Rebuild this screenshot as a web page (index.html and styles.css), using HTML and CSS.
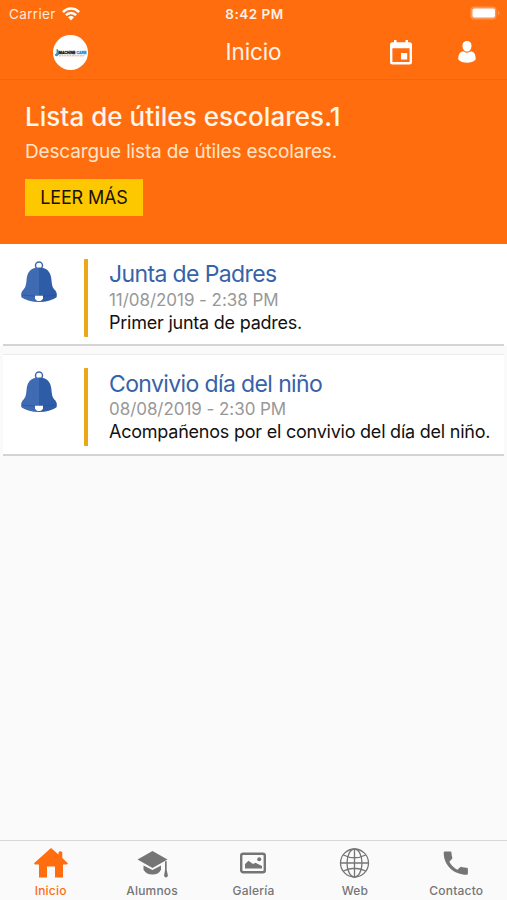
FILE: index.html
```html
<!DOCTYPE html>
<html lang="es">
<head>
<meta charset="utf-8">
<title>Inicio</title>
<link rel="stylesheet" href="styles.css">
</head>
<body>
<div class="app">
  <div class="status">
    <div class="carrier"><span>Carrier</span>
      <svg width="18" height="14" viewBox="0 0 18 14" fill="none" stroke="#fff" stroke-width="2.5"><path d="M.9 5.2C5.5.4 12.500.4 17.100 5.200M3.900 8.200C6.800 5.200 11.200 5.200 14.100 8.200"/><path d="M6 10.200Q9 7.700 12 10.200L9 13.400Z" fill="#fff" stroke="none"/></svg>
    </div>
    <div class="clock">8:42 PM</div>
    <svg class="battery" width="30" height="14" viewBox="0 0 30 14"><rect x=".5" y=".5" width="26" height="13" rx="4" fill="#ff9552"/><rect x="2.500" y="2.500" width="22.500" height="9" rx="2" fill="#fff"/><path d="M28 4.500Q31 7 28 9.500Z" fill="#ff9552"/></svg>
  </div>
  <header class="navbar">
    <div class="logo">
      <svg width="35" height="35" viewBox="0 0 35 35"><circle cx="17.500" cy="17.500" r="17.500" fill="#fff"/><path d="M4 14v4l-2 2 2 1 2-2v-3" fill="#4297d1" stroke="#397da6" stroke-width=".8"/><g class="brand" transform="translate(0 -4.900) scale(1 1.250)"><text x="6" y="19.300" fill="#171a22" stroke="#171a22" stroke-width=".3">MACHINE</text><text x="23.500" y="19.300" fill="#258fd0" stroke="#258fd0" stroke-width=".3">CARE</text></g><path d="M6 20.800h26" stroke="#f7a181" stroke-width="1" stroke-dasharray="2 .6"/></svg>
    </div>
    <h1>Inicio</h1>
    <div class="actions">
      <svg width="22" height="25" viewBox="0 0 22 25"><path fill="#fff" fill-rule="evenodd" d="M4 0h2.500v2.300h9V0H18v2.300h1.500Q22 2.300 22 4.800v17.400Q22 24.500 19.500 24.500h-17Q0 24.500 0 22.200V4.800Q0 2.300 2.500 2.300H4ZM2.400 8.300v13.800h17.200V8.300ZM11 13h6.200v6.500H11Z"/></svg>
      <svg width="18" height="22" viewBox="0 0 18 22" fill="#fff"><path d="M9 0C12.200 0 13.700 2.400 13.500 5.200C13.300 8.300 11.600 10.600 9 10.600S4.700 8.300 4.500 5.200C4.300 2.400 5.800 0 9 0ZM5 10.300Q9 13.200 13 10.300C16.600 11.300 17.800 14 17.700 18.500Q14.500 21.800 9 21.800T.3 18.500C.2 14 1.400 11.300 5 10.300Z"/></svg>
    </div>
  </header>
  <section class="hero">
    <h2>Lista de útiles escolares.1</h2>
    <p>Descargue lista de útiles escolares.</p>
    <button>LEER MÁS</button>
  </section>
  <main>
    <article class="card">
      <svg class="bell" width="36" height="42" viewBox="0 0 36 42"><circle cx="18" cy="4.500" r="3.500" fill="none" stroke="#3d69ae" stroke-width="1.500"/><path d="M18 6.500C10 6.500 6.400 11 5.700 17.500C5 24.500 4.800 26.500 1.600 29.500Q-.3 32 .4 36.200Q7 41 18 41Z" fill="#3f6bb3"/><path d="M18 6.500C26 6.500 29.600 11 30.300 17.500C31 24.500 31.200 26.500 34.400 29.500Q36.300 32 35.600 36.200Q29 41 18 41Z" fill="#2f5ca6"/><path d="M.8 34Q18 37 35.200 34" fill="none" stroke="#2a529a" stroke-width=".7"/><path d="M14 34.700h8v2.500Q21 40 18 40t-4-2.800Z" fill="#fff"/></svg>
      <div class="entry"><h3>Junta de Padres</h3><time>11/08/2019 - 2:38 PM</time><p>Primer junta de padres.</p></div>
    </article>
    <article class="card">
      <svg class="bell" width="36" height="42" viewBox="0 0 36 42"><circle cx="18" cy="4.500" r="3.500" fill="none" stroke="#3d69ae" stroke-width="1.500"/><path d="M18 6.500C10 6.500 6.400 11 5.700 17.500C5 24.500 4.800 26.500 1.600 29.500Q-.3 32 .4 36.200Q7 41 18 41Z" fill="#3f6bb3"/><path d="M18 6.500C26 6.500 29.600 11 30.300 17.500C31 24.500 31.200 26.500 34.400 29.500Q36.300 32 35.600 36.200Q29 41 18 41Z" fill="#2f5ca6"/><path d="M.8 34Q18 37 35.200 34" fill="none" stroke="#2a529a" stroke-width=".7"/><path d="M14 34.700h8v2.500Q21 40 18 40t-4-2.800Z" fill="#fff"/></svg>
      <div class="entry"><h3>Convivio día del niño</h3><time>08/08/2019 - 2:30 PM</time><p>Acompañenos por el convivio del día del niño.</p></div>
    </article>
  </main>
  <nav class="tabs">
    <a class="active"><svg width="34" height="32" viewBox="0 0 34 32" fill="currentColor"><path d="M17 1 24.500 7.500V5.200q1.800-2 3.800 0v5.700L34 16.400l-1.200 1H29v13H21V19.500h-8v10.900H5v-13H.8L0 16.200Z"/></svg><span>Inicio</span></a>
    <a><svg width="34" height="32" viewBox="0 0 34 32" fill="currentColor"><path d="m17.500 4 15 8.500-15 8.500-15-8.500ZM8.500 18.500l9 4.600 8.500-4.600v4.200Q23.500 27.600 17.500 27.600T8.500 22.700ZM30 14.300h1.700v8.700l1.300 6-2 1.800-2-1.800 1-6Z"/></svg><span>Alumnos</span></a>
    <a><svg width="34" height="32" viewBox="0 0 34 32" fill="currentColor"><rect x="5.200" y="6.700" width="23.600" height="18.600" rx="2" fill="none" stroke="currentColor" stroke-width="2.400"/><path d="M9 21.500V17l3.500-3.300 4.500 3.300 2.500-1.200 3 1.500 3.500 1.700v2.500Z"/><circle cx="23.200" cy="12.300" r="2"/></svg><span>Galería</span></a>
    <a><svg width="34" height="32" viewBox="0 0 34 32" fill="none" stroke="currentColor" stroke-width="1.300"><circle cx="16.500" cy="16" r="14"/><ellipse cx="16.500" cy="16" rx="7.500" ry="14"/><path d="M16.500 2v28M2.500 16h28M5.300 8Q16.500 13.500 27.700 8M5.300 24Q16.500 18.500 27.700 24"/></svg><span>Web</span></a>
    <a><svg width="34" height="32" viewBox="0 0 34 32" fill="currentColor"><path d="M6 4.500h5.200q1.300 0 1.300 1.300 0 2.500.8 4.800.3.900-.4 1.500l-2.600 2.700q2.800 5.300 8.100 8l2.700-2.500q.6-.6 1.500-.4 2.300.8 5 .8 1.300 0 1.300 1.300v4.400q0 1.400-1.300 1.400C15 27.800 4.700 18.500 4.700 5.800q0-1.300 1.300-1.300Z"/></svg><span>Contacto</span></a>
  </nav>
</div>
</body>
</html>
```

FILE: styles.css
```css
* { box-sizing: border-box; }
body { margin: 0; font-family: Inter, "Liberation Sans", sans-serif; background: #fafafa; }
h1, h2, h3, p { margin: 0; font-weight: 400; white-space: nowrap; }
svg { display: block; flex: none; }
.app { width: 507px; height: 900px; display: flex; flex-direction: column; }
.status { height: 28px; background: #ff6d0f; color: #fff; display: grid; grid-template-columns: 1fr auto 1fr; align-items: center; padding: 0 7px 0 9px; font-size: 13px; }
.carrier { display: flex; align-items: center; gap: 6px; color: #ffe9dc; font-size: 13.5px; letter-spacing: .35px; }
.clock { font-weight: 600; font-size: 13.5px; letter-spacing: .5px; color: #fff2e8; }
.battery { justify-self: end; margin-top: -2px; }
.navbar { height: 52px; background: #ff6d0f; border-bottom: 1px solid #f5640b; display: grid; grid-template-columns: 1fr auto 1fr; align-items: center; padding: 0 31px 3px 53px; color: #fff2e8; }
.navbar h1 { font-size: 22.5px; line-height: 28px; margin: 0 22px 0 0; letter-spacing: -.1px; }
.brand { font: 700 3.5px "Liberation Sans", sans-serif; }
.actions { display: flex; align-items: center; justify-content: flex-end; gap: 46.5px; }
.hero { height: 164px; background: #ff6d0f; padding: 19px 25px; display: flex; flex-direction: column; align-items: flex-start; }
.hero h2 { font-size: 26px; line-height: 35px; font-weight: 500; color: #fff5e9; letter-spacing: .04px; }
.hero p { font-size: 19px; line-height: 26px; margin-top: 5px; color: #ffe5c8; letter-spacing: -.15px; }
.hero button { width: 118px; height: 37px; margin-top: 14px; padding: 0; border: 0; background: #fec800; color: #181200; font: 400 18px Inter, sans-serif; letter-spacing: -.15px; white-space: nowrap; }
main { flex: 1; display: flex; flex-direction: column; gap: 8px; padding: 0 3px; }
.card { height: 102px; background: #fff; border-bottom: 2px solid #d4d4d4; display: flex; padding: 15px 0 8px 18px; }
.card:first-child { margin: 0 -3px; padding-left: 21px; border-bottom: 0; background: linear-gradient(#d4d4d4, #d4d4d4) center bottom / calc(100% - 6px) 2px no-repeat, #fff; }
.card + .card { border-top: 1px solid #ebebeb; padding-top: 13px; }
.bell { margin: 2px 27px 0 0; }
.card + .card .bell { margin-top: 3px; }
.entry { height: 78px; border-left: 4px solid #eca719; border-radius: 1px; padding-left: 21px; }
.entry h3 { font-size: 23px; line-height: 31px; letter-spacing: -.62px; color: #3762a8; }
.card + .card h3 { line-height: 32px; margin-bottom: -1px; }
.entry time { display: block; font-size: 17px; line-height: 21px; letter-spacing: -.05px; color: #989898; white-space: nowrap; }
.entry p { font-size: 18px; line-height: 23px; letter-spacing: -.23px; color: #111; }
.card + .card p { line-height: 24px; }
.tabs { height: 60px; border-top: 1px solid #d8d8d8; display: grid; grid-template-columns: repeat(5, 1fr); color: #757575; }
.tabs a { display: flex; flex-direction: column; align-items: center; padding-top: 6px; }
.tabs span { font-size: 12px; font-weight: 500; line-height: 18px; margin-top: 3px; letter-spacing: .2px; }
.tabs .active { color: #ff6d0f; }
```
